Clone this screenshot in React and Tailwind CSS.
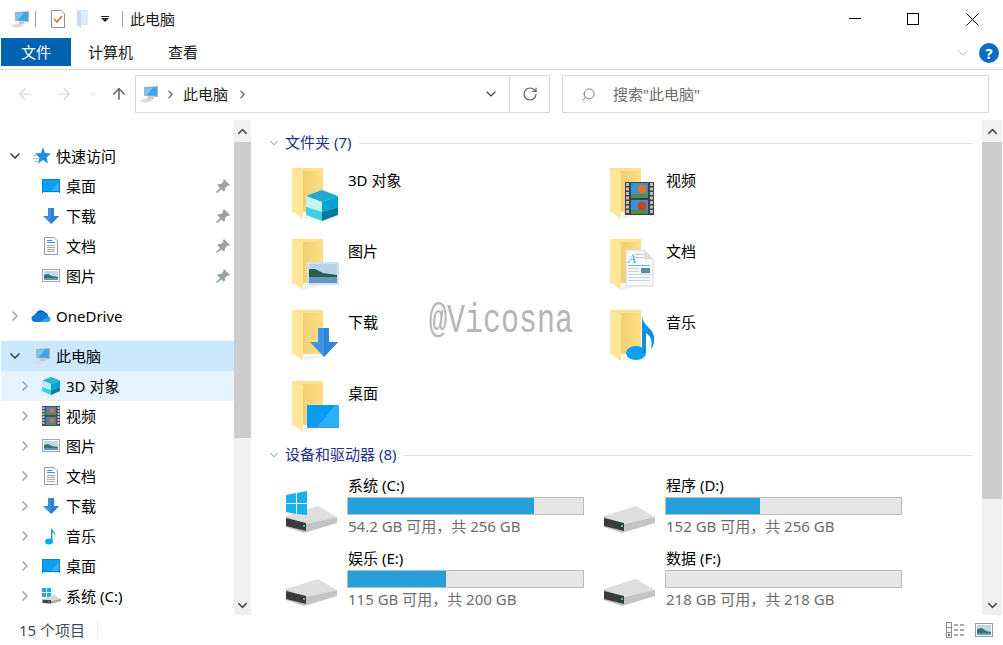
import { ChevronDown, ChevronRight, ChevronUp, ArrowLeft, ArrowRight, ArrowUp, RotateCw, Search } from 'lucide-react'

const PcIcon = () => (
  <svg width="20" height="20" viewBox="0 0 20 20">
    <polygon points="0,17 8,14 15,16 7,19" fill="#d9dde0" />
    <polygon points="5,3 19,2 19,13 5,12" fill="#a9b4bd" />
    <polygon points="6,4 18,3 18,12 6,11" fill="#3fa5e6" />
    <polygon points="6,4 14,3.5 8,11 6,11" fill="#75c4f2" />
    <polygon points="9,12 14,12.5 15,15 9,15" fill="#c3c9ce" />
  </svg>
)

const DesktopSmall = () => (
  <svg width="20" height="20" viewBox="0 0 20 20">
    <rect x="1" y="3" width="18" height="14" fill="#0a7fd9" />
    <rect x="2" y="4" width="16" height="11" fill="#0ea0f5" />
    <polygon points="10,15 18,6 18,15" fill="#2eb1fa" />
    <rect x="2" y="16" width="16" height="1" fill="#d6eefc" />
  </svg>
)

const DownloadSmall = () => (
  <svg width="20" height="20" viewBox="0 0 20 20">
    <polygon points="7,2 13,2 13,10 18,10 10,18 2,10 7,10" fill="#3c8fdf" />
    <polygon points="10,2 13,2 13,10 18,10 10,18" fill="#2f7dd0" />
  </svg>
)

const DocSmall = () => (
  <svg width="20" height="20" viewBox="0 0 20 20">
    <polygon points="3.5,1.5 13,1.5 16.5,5 16.5,18.5 3.5,18.5" fill="#fff" stroke="#9a9a9a" />
    <rect x="6" y="4" width="5" height="1" fill="#2a9fe0" />
    <rect x="6" y="6" width="8" height="1" fill="#2a9fe0" />
    <rect x="6" y="9" width="8" height="1" fill="#a8a8a8" />
    <rect x="6" y="11" width="8" height="1" fill="#a8a8a8" />
    <rect x="6" y="13" width="8" height="1" fill="#a8a8a8" />
    <rect x="6" y="15" width="8" height="1" fill="#a8a8a8" />
  </svg>
)

const PicSmall = () => (
  <svg width="20" height="20" viewBox="0 0 20 20">
    <rect x="1.5" y="3.5" width="17" height="12" fill="#fff" stroke="#a5a5a5" />
    <rect x="3" y="5" width="14" height="9" fill="#bcd8ec" />
    <polygon points="3,9 7,8 11,10 17,11 17,14 3,14" fill="#3f6f62" />
    <rect x="3" y="12" width="14" height="2" fill="#5d98c4" />
  </svg>
)

const CubeSmall = () => (
  <svg width="20" height="20" viewBox="0 0 20 20">
    <polygon points="10,1 19,4.500 10,8 1,4.500" fill="#2ab4d4" />
    <polygon points="1,4.500 10,8 10,14 1,11" fill="#b6eef0" />
    <polygon points="10,8 19,4.500 19,11 10,14" fill="#00a2d4" />
    <polygon points="1,11 10,14 10,19 1,15" fill="#3bd0e2" />
    <polygon points="10,14 19,11 19,15 10,19" fill="#0780a4" />
  </svg>
)

const FilmSmall = () => (
  <svg width="20" height="20" viewBox="0 0 20 20">
    <rect x="1" y="0" width="18" height="20" fill="#4a4d50" />
    <path d="M2.500 1v18M17.500 1v18" stroke="#c4c4c4" strokeWidth="2" strokeDasharray="2 1" />
    <rect x="5" y="1" width="10" height="8" fill="#3f82c8" />
    <rect x="5" y="11" width="10" height="8" fill="#3f82c8" />
    <circle cx="11" cy="4.500" r="2.500" fill="#d9762b" />
    <circle cx="11" cy="14.500" r="2.500" fill="#d9762b" />
    <rect x="5" y="7" width="10" height="2" fill="#4b8f4f" />
    <rect x="5" y="17" width="10" height="2" fill="#4b8f4f" />
  </svg>
)

const NoteSmall = () => (
  <svg width="20" height="20" viewBox="0 0 20 20">
    <ellipse cx="8" cy="15.5" rx="4" ry="3" fill="#12a5f4" />
    <path d="M10 15V1.5c1 3 5 4.5 4.5 9-.3-2.5-2-3.5-3-4V15z" fill="#12a5f4" />
  </svg>
)

const DriveSmall = () => (
  <svg width="20" height="20" viewBox="0 0 20 20">
    <rect x="1" y="2" width="4" height="4" fill="#19a9ee" />
    <rect x="6" y="2" width="4" height="4" fill="#19a9ee" />
    <rect x="1" y="7" width="4" height="4" fill="#19a9ee" />
    <rect x="6" y="7" width="4" height="4" fill="#19a9ee" />
    <polygon points="1,13 13,9 20,13 10,15" fill="#d8d8d8" />
    <polygon points="1,13 10,15 20,13 20,15 9,18 1,17" fill="#a3a3a3" />
    <rect x="2" y="14" width="8" height="3" fill="#444" />
    <rect x="7" y="15" width="1" height="1" fill="#45d34a" />
  </svg>
)

const Star = () => (
  <svg width="20" height="20" viewBox="0 0 20 20">
    <polygon points="12,1 14,7 20,7.500 15.500,11.500 17,17.500 12,14 7,17.500 8.500,11.500 4,7.500 10,7" fill="#1d8fe6" />
    <rect x="2" y="9" width="3" height="1" fill="#9bc9ee" />
    <rect x="2" y="12" width="5" height="1" fill="#9bc9ee" />
    <rect x="3" y="15" width="4" height="1" fill="#9bc9ee" />
  </svg>
)

const Cloud = () => (
  <svg width="20" height="20" viewBox="0 0 20 20">
    <path d="M5 9a5 5 0 0 1 9.5-2A4 4 0 0 1 17 9z" fill="#0a5fb4" />
    <path d="M3.5 16A3.5 3.5 0 0 1 3 9.2 4 4 0 0 1 9 7.5a4.5 4.5 0 0 1 8 2.7 3 3 0 0 1-.5 5.8z" fill="#0f78d4" />
    <path d="M3.5 16h13a3 3 0 0 0 3-3c0-1-.5-2-1.500-2.500L8 16z" fill="#28a8ea" />
  </svg>
)

const Pin = () => (
  <svg width="14" height="14" viewBox="0 0 14 14">
    <polygon points="8,0 14,6 12.500,7 11.500,6.500 9,9 9,11.500 7.500,12.500 1.500,6.500 2.500,5 5,5 7.500,2.500 7,1.500" fill="#9ba3aa" />
    <polygon points="4,9 5.500,10.500 1,14 0,13" fill="#9ba3aa" />
  </svg>
)

const Folder = ({ children }) => (
  <svg width="56" height="56" viewBox="0 0 56 56" className="shrink-0">
    <defs>
      <linearGradient id="fback" x1="0" x2="1" y1="0" y2="0">
        <stop offset="0" stopColor="#e9c868" />
        <stop offset="1" stopColor="#ffdf85" />
      </linearGradient>
    </defs>
    <polygon points="20,50 40,47 40,49 20,54" fill="#f0f0f0" />
    <rect x="8" y="3" width="31" height="44" fill="url(#fback)" />
    <rect x="8" y="3" width="31" height="3" fill="#fde08c" />
    <polygon points="8,3 19,7 19,54 8,46" fill="#fde697" />
    {children}
  </svg>
)

const Cube = () => (
  <g>
    <polygon points="38,25 54,31 38,37 22,31" fill="#21a9d2" />
    <polygon points="22,31 38,37 38,47 22,42" fill="#c8f1f1" />
    <polygon points="38,37 54,31 54,42 38,47" fill="#00a3d6" />
    <polygon points="22,42 38,47 38,56 22,50" fill="#3bd0e2" />
    <polygon points="38,47 54,42 54,50 38,56" fill="#06799d" />
  </g>
)

const Picture = () => (
  <g>
    <rect x="23" y="26" width="32" height="23" fill="#d6e0ea" />
    <rect x="25" y="28" width="28" height="19" fill="#b4d4ec" />
    <polygon points="25,33 31,33 39,37 53,39 53,47 25,47" fill="#2f5d4a" />
    <rect x="25" y="41" width="28" height="6" fill="#5f9ac4" />
  </g>
)

const Film = () => (
  <g>
    <rect x="23" y="17" width="29" height="33" fill="#3f4245" />
    <path d="M25.500 18v31M49.500 18v31" stroke="#c0c0c0" strokeWidth="3" strokeDasharray="3 1.500" />
    <rect x="29" y="18" width="17" height="15" fill="#3f8fd6" />
    <rect x="29" y="35" width="17" height="14" fill="#3f8fd6" />
    <circle cx="40" cy="24" r="4.500" fill="#d9762b" />
    <circle cx="40" cy="41" r="4.500" fill="#c9402b" />
    <rect x="29" y="29" width="17" height="4" fill="#4b8f4f" />
    <rect x="29" y="45" width="17" height="4" fill="#4b8f4f" />
  </g>
)

const DocOverlay = () => (
  <g>
    <polygon points="24,14 42,14 51,23 51,50 24,50" fill="#f8f9fa" stroke="#d6d6d6" />
    <polygon points="42,14 51,23 42,23" fill="#dcdcdc" />
    <text x="26" y="27" fontFamily="Liberation Serif, serif" fontStyle="italic" fontSize="13" fill="#3d9fdc">A</text>
    <rect x="33" y="18" width="8" height="1" fill="#b8c8d6" />
    <rect x="33" y="21" width="8" height="1" fill="#b8c8d6" />
    <rect x="26" y="29" width="22" height="1" fill="#6cbbe8" />
    <rect x="26" y="32" width="11" height="1" fill="#c8d2da" />
    <rect x="26" y="35" width="11" height="1" fill="#c8d2da" />
    <rect x="26" y="38" width="22" height="1" fill="#c8d2da" />
    <rect x="26" y="41" width="22" height="1" fill="#c8d2da" />
    <rect x="26" y="44" width="22" height="1" fill="#c8d2da" />
    <rect x="39" y="32" width="9" height="5" fill="#5b8aa8" />
  </g>
)

const NoteOverlay = () => (
  <g>
    <ellipse cx="34" cy="46" rx="10" ry="7" fill="#0d9ff0" />
    <path d="M40 46V10c1 5 4 8 7 11 4 4 6 8 5 14-.5 3-1 5-3 7 1-5 1-9-1-12-1-2-3-3-4-4v20z" fill="#0d8fe6" />
  </g>
)

const ArrowOverlay = () => (
  <g>
    <polygon points="34,21 45,21 45,35 54,35 40,50 26,35 34,35" fill="#3d97e6" />
    <polygon points="40,21 45,21 45,35 54,35 40,50" fill="#2f85d8" />
  </g>
)

const DeskOverlay = () => (
  <g>
    <rect x="23" y="27" width="32" height="23" fill="#0a9cf5" />
    <polygon points="34,49 51,27 55,27 55,49" fill="#2cb0fb" />
    <rect x="23" y="49" width="32" height="1" fill="#5c8fb0" />
  </g>
)

const DriveIcon = ({ win }) => (
  <svg width="56" height="56" viewBox="0 0 56 56" className="shrink-0">
    <polygon points="2,34 34,24 53,35 22,42" fill="#dedede" />
    <polygon points="2,34 22,42 53,35 53,41 20,51 2,45" fill="#c4c4c4" />
    <polygon points="2,36 22,41 22,49 2,44" fill="#3b3b3b" />
    <rect x="19" y="43" width="2" height="2" fill="#39d15a" />
    {win && (
      <g fill="#18b1f0" transform="translate(0 7)">
        <polygon points="2,6 12,4 12,14 2,14" />
        <polygon points="13,4 23,2 23,14 13,14" />
        <polygon points="2,15 12,15 12,25 2,23" />
        <polygon points="13,15 23,15 23,26 13,25" />
      </g>
    )}
  </svg>
)

const NavRow = ({ level, open, arrow, icon, label, pin, bg }) => (
  <div className={`flex h-[30px] items-center text-[15px] text-black ${bg}`}>
    <div className={level === 0 ? 'flex w-[30px] justify-end pr-[10px]' : 'flex w-[40px] justify-end pr-[10px]'}>
      {arrow &&
        (open ? (
          <ChevronDown size={16} strokeWidth={2.500} className="mr-[-2px] text-[#404040]" />
        ) : (
          <ChevronRight size={16} strokeWidth={2.500} className="mr-[-2px] text-[#a6a6a6]" />
        ))}
    </div>
    {icon}
    <span className="ml-[5px] flex-1 whitespace-nowrap">{label}</span>
    {pin && (
      <span className="mr-[4px]">
        <Pin />
      </span>
    )}
  </div>
)

const Scrollbar = ({ thumb, width }) => (
  <div className={`flex h-full ${width} flex-col bg-[#f0f0f0]`}>
    <div className="flex h-[22px] items-center justify-center text-[#505050]">
      <ChevronUp size={15} strokeWidth={2.500} />
    </div>
    <div className={`${thumb} bg-[#cdcdcd]`} />
    <div className="flex-1" />
    <div className="flex h-[20px] items-center justify-center text-[#505050]">
      <ChevronDown size={15} strokeWidth={2.500} />
    </div>
  </div>
)

const SectionHead = ({ title }) => (
  <div className="flex h-[20px] items-center pr-[10px] pl-[16px]">
    <ChevronDown size={14} strokeWidth={1.500} className="text-[#808080]" />
    <span className="mb-[2px] ml-[4px] text-[15px] whitespace-nowrap text-[#1e3287]">{title}</span>
    <div className="ml-[8px] h-px flex-1 bg-[#e2e2e2]" />
  </div>
)

const folders = [
  { name: '3D 对象', art: <Cube /> },
  { name: '视频', art: <Film /> },
  { name: '图片', art: <Picture /> },
  { name: '文档', art: <DocOverlay /> },
  { name: '下载', art: <ArrowOverlay /> },
  { name: '音乐', art: <NoteOverlay /> },
  { name: '桌面', art: <DeskOverlay /> },
]

const drives = [
  { name: '系统 (C:)', used: 79, info: '54.2 GB 可用，共 256 GB', win: true },
  { name: '程序 (D:)', used: 40, info: '152 GB 可用，共 256 GB' },
  { name: '娱乐 (E:)', used: 41.5, info: '115 GB 可用，共 200 GB' },
  { name: '数据 (F:)', used: 0, info: '218 GB 可用，共 218 GB' },
]

export default function App() {
  return (
    <div
      className="relative flex h-[645px] w-[1003px] flex-col overflow-hidden bg-white text-black"
      style={{ fontFamily: '"Noto Sans", "Noto Sans CJK SC", sans-serif' }}
    >
      {/* title bar */}
      <div className="flex h-[38px] items-center pl-[10px]">
        <PcIcon />
        <div className="ml-[5px] h-[16px] w-px bg-[#a0a0a0]" />
        <svg width="16" height="20" viewBox="0 0 16 20" className="ml-[14px]">
          <polygon points="1.500,1.500 11,1.500 14.500,5 14.500,18.500 1.500,18.500" fill="#fff" stroke="#8f8f8f" />
          <path d="M4 10l3 3 5-6" fill="none" stroke="#e0632a" strokeWidth="1.500" />
        </svg>
        <svg width="14" height="20" viewBox="0 0 14 20" className="ml-[10px]">
          <polygon points="1,1 12,1 12,16 5,16 5,19 1,16" fill="#dfe8f6" />
          <polygon points="1,1 5,3 5,19 1,16" fill="#cbd9ef" />
        </svg>
        <svg width="8" height="6" viewBox="0 0 8 6" className="ml-[11px]">
          <rect x="0" y="0" width="8" height="1" fill="#222" />
          <polygon points="0,2 8,2 4,6" fill="#222" />
        </svg>
        <div className="ml-[13px] h-[16px] w-px bg-[#a0a0a0]" />
        <span className="ml-[7px] text-[15px] text-[#1a1a1a]">此电脑</span>
        <div className="flex-1" />
        <svg width="12" height="2" className="mr-[46px]">
          <rect width="12" height="1" y="0" fill="#000" />
        </svg>
        <div className="mr-[47px] h-[12px] w-[12px] border border-black" />
        <svg width="13" height="13" viewBox="0 0 13 13" className="mr-[24px]">
          <path d="M.5.5l12 12M12.500.5l-12 12" stroke="#000" fill="none" />
        </svg>
      </div>

      {/* ribbon tabs */}
      <div className="flex h-[32px] items-start border-b border-[#dadada] pl-px">
        <div className="flex h-[28px] w-[70px] items-center justify-center bg-[#0063b1] text-[15px] text-white">文件</div>
        <div className="flex h-[28px] items-center pl-[17px] text-[15px] text-[#1a1a1a]">计算机</div>
        <div className="flex h-[28px] items-center pl-[35px] text-[15px] text-[#1a1a1a]">查看</div>
        <div className="flex-1" />
        <ChevronDown size={18} strokeWidth={1} className="mt-[6px] text-[#9a9a9a]" />
        <div className="mt-[5px] mr-[4px] ml-[7px] flex h-[20px] w-[20px] items-center justify-center rounded-full bg-[#0b6cc4] text-[15px] leading-none font-bold text-white">?</div>
      </div>

      {/* address row */}
      <div className="flex h-[50px] items-start pt-[5px]">
        <div className="flex h-[38px] w-[135px] items-center">
          <ArrowLeft size={18} strokeWidth={1.500} className="ml-[16px] text-[#d5d5d5]" />
          <ArrowRight size={18} strokeWidth={1.500} className="ml-[21px] text-[#d5d5d5]" />
          <ChevronDown size={10} strokeWidth={2} className="ml-[15px] text-[#d5d5d5]" />
          <ArrowUp size={18} strokeWidth={2} className="ml-[12px] text-[#606060]" />
        </div>
        <div className="flex h-[38px] w-[415px] items-center border border-[#d9d9d9] pl-[3px]">
          <PcIcon />
          <ChevronRight size={13} strokeWidth={2.500} className="ml-[5px] text-[#707070]" />
          <span className="ml-[6px] text-[15px] text-[#1a1a1a]">此电脑</span>
          <ChevronRight size={13} strokeWidth={2.500} className="ml-[8px] text-[#707070]" />
          <div className="flex-1" />
          <ChevronDown size={16} strokeWidth={1.750} className="mr-[10px] text-[#404040]" />
          <div className="h-full w-px bg-[#d9d9d9]" />
          <div className="flex w-[39px] items-center justify-center pl-px">
            <RotateCw size={16} strokeWidth={1.750} className="text-[#606060]" />
          </div>
        </div>
        <div className="ml-[12px] flex h-[38px] w-[427px] items-center border border-[#d9d9d9] pl-[18px]">
          <Search size={15} strokeWidth={1.250} className="-scale-x-100 text-[#606060]" />
          <span className="ml-[17px] text-[15px] text-[#6d6d6d]">搜索"此电脑"</span>
        </div>
      </div>

      {/* main */}
      <div className="flex h-[495px]">
        <div className="w-[234px] pt-[21px] pl-px">
          <NavRow level={0} arrow open icon={<Star />} label="快速访问" />
          <NavRow level={1} icon={<DesktopSmall />} label="桌面" pin />
          <NavRow level={1} icon={<DownloadSmall />} label="下载" pin />
          <NavRow level={1} icon={<DocSmall />} label="文档" pin />
          <NavRow level={1} icon={<PicSmall />} label="图片" pin />
          <div className="h-[10px]" />
          <NavRow level={0} arrow icon={<Cloud />} label="OneDrive" />
          <div className="h-[10px]" />
          <NavRow level={0} arrow open icon={<PcIcon />} label="此电脑" bg="bg-[#cce8ff]" />
          <NavRow level={1} arrow icon={<CubeSmall />} label="3D 对象" bg="bg-[#e5f3ff]" />
          <NavRow level={1} arrow icon={<FilmSmall />} label="视频" />
          <NavRow level={1} arrow icon={<PicSmall />} label="图片" />
          <NavRow level={1} arrow icon={<DocSmall />} label="文档" />
          <NavRow level={1} arrow icon={<DownloadSmall />} label="下载" />
          <NavRow level={1} arrow icon={<NoteSmall />} label="音乐" />
          <NavRow level={1} arrow icon={<DesktopSmall />} label="桌面" />
          <NavRow level={1} arrow icon={<DriveSmall />} label="系统 (C:)" />
        </div>
        <Scrollbar thumb="h-[296px]" width="w-[17px]" />
        <div className="flex-1 pt-[13px]">
          <SectionHead title="文件夹 (7)" />
          <div className="mt-[9px] grid grid-cols-[318px_318px] pl-[33px]">
            {folders.map((f) => (
              <div key={f.name} className="flex h-[71px] items-start">
                <div className="mt-[3px]">
                  <Folder>{f.art}</Folder>
                </div>
                <span className="mt-[8px] ml-[8px] text-[15px] leading-[20px]">{f.name}</span>
              </div>
            ))}
          </div>
          <div className="-mt-px">
            <SectionHead title="设备和驱动器 (8)" />
          </div>
          <div className="mt-[10px] grid grid-cols-[318px_318px] pl-[33px]">
            {drives.map((d) => (
              <div key={d.name} className="flex h-[73px] items-start">
                <div className="mt-[7px]">
                  <DriveIcon win={d.win} />
                </div>
                <div className="ml-[7px] w-[237px]">
                  <div className="ml-px text-[15px] leading-[20px]">{d.name}</div>
                  <div className="mt-[2px] h-[18px] border border-[#bcbcbc] bg-[#e6e6e6]">
                    <div className="h-full bg-[#26a0da]" style={{ width: `${d.used}%` }} />
                  </div>
                  <div className="mt-px ml-px text-[15px] leading-[20px] whitespace-nowrap text-[#6d6d6d]">{d.info}</div>
                </div>
              </div>
            ))}
          </div>
        </div>
        <div className="mr-px">
          <Scrollbar thumb="h-[357px]" width="w-[20px]" />
        </div>
      </div>

      {/* status bar */}
      <div className="flex h-[30px] items-center">
        <span className="ml-[19px] w-[78px] text-[15px] text-[#3f4a55]">15 个项目</span>
        <div className="h-[18px] w-px bg-[#ececec]" />
        <div className="flex-1" />
        <svg width="19" height="17" viewBox="0 0 19 17" className="mr-[10px]">
          <rect x=".5" y=".5" width="5" height="5" fill="#fff" stroke="#8a8a8a" />
          <rect x=".5" y="5.500" width="5" height="5" fill="#fff" stroke="#8a8a8a" />
          <rect x=".5" y="10.500" width="5" height="5" fill="#fff" stroke="#8a8a8a" />
          <rect x="2" y="12" width="2" height="2" fill="#c0392b" />
          <path d="M8 3h4M14 3h4M8 8h4M14 8h4M8 13h4M14 13h4" stroke="#555" />
        </svg>
        <svg width="18" height="15" viewBox="0 0 18 15" className="mr-[10px]">
          <rect x=".5" y=".5" width="17" height="13" fill="#fff" stroke="#9a9a9a" />
          <rect x="2" y="2" width="14" height="10" fill="#bcd8ec" />
          <polygon points="2,6 7,5 11,8 16,9 16,12 2,12" fill="#3f6f62" />
          <rect x="2" y="10" width="14" height="2" fill="#5d98c4" />
        </svg>
      </div>

      {/* watermark */}
      <div className="absolute top-[297px] left-[429px] origin-left scale-x-75 text-[40px] leading-[50px] whitespace-nowrap text-[#b5b5b5]" style={{ fontFamily: '"Liberation Mono", monospace' }}>
        @Vicosna
      </div>
    </div>
  )
}
